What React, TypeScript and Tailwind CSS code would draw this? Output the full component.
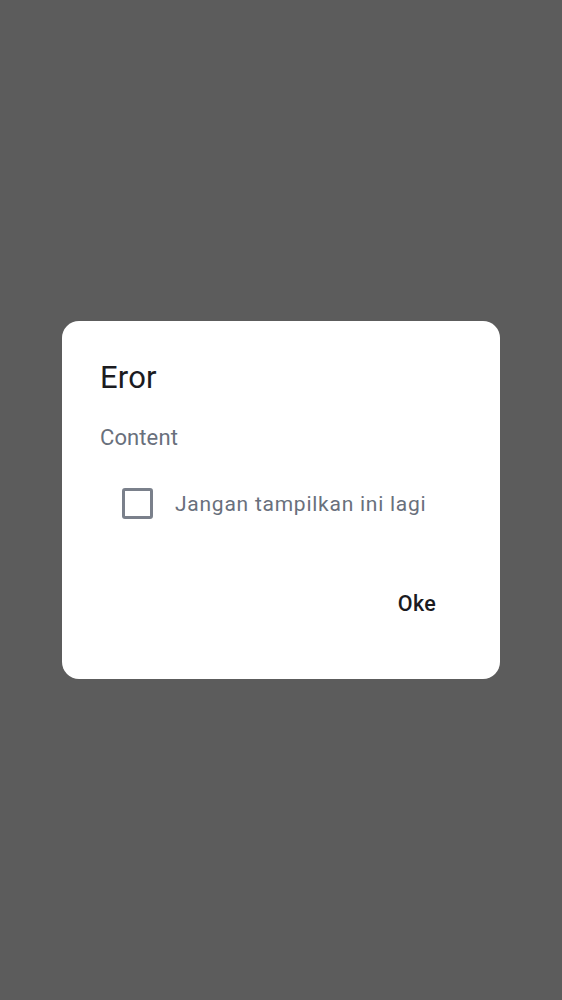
export default function App() {
  return (
    <div
      className="min-h-screen w-full bg-[#5c5c5c] flex items-center justify-center"
      style={{ fontFamily: "Roboto, 'Noto Sans', sans-serif" }}
    >
      <ErrorDialog />
    </div>
  );
}

function ErrorDialog() {
  return (
    <div className="w-[438px] h-[358px] bg-white rounded-[17px] pl-[38px] pr-[40px] pt-[37px] flex flex-col">
      <h2 className="text-[31px] leading-[40px] text-[#1b1b1f] tracking-[0.2px]">Eror</h2>
      <p className="mt-[26px] text-[22px] leading-[28px] text-[#69707c] tracking-[0.1px]">Content</p>
      <label className="mt-[36px] ml-[22px] flex items-center gap-[22px]">
        <span className="w-[31px] h-[31px] rounded-[3px] border-[3px] border-[#7a808b] shrink-0" />
        <span className="text-[21px] leading-[30px] text-[#69707c] tracking-[0.75px]">
          Jangan tampilkan ini lagi
        </span>
      </label>
      <div className="mt-[71px] flex justify-end pr-[24px]">
        <button className="text-[21.5px] leading-[28px] font-medium text-[#1b1b1f] tracking-[0.3px]">
          Oke
        </button>
      </div>
    </div>
  );
}
